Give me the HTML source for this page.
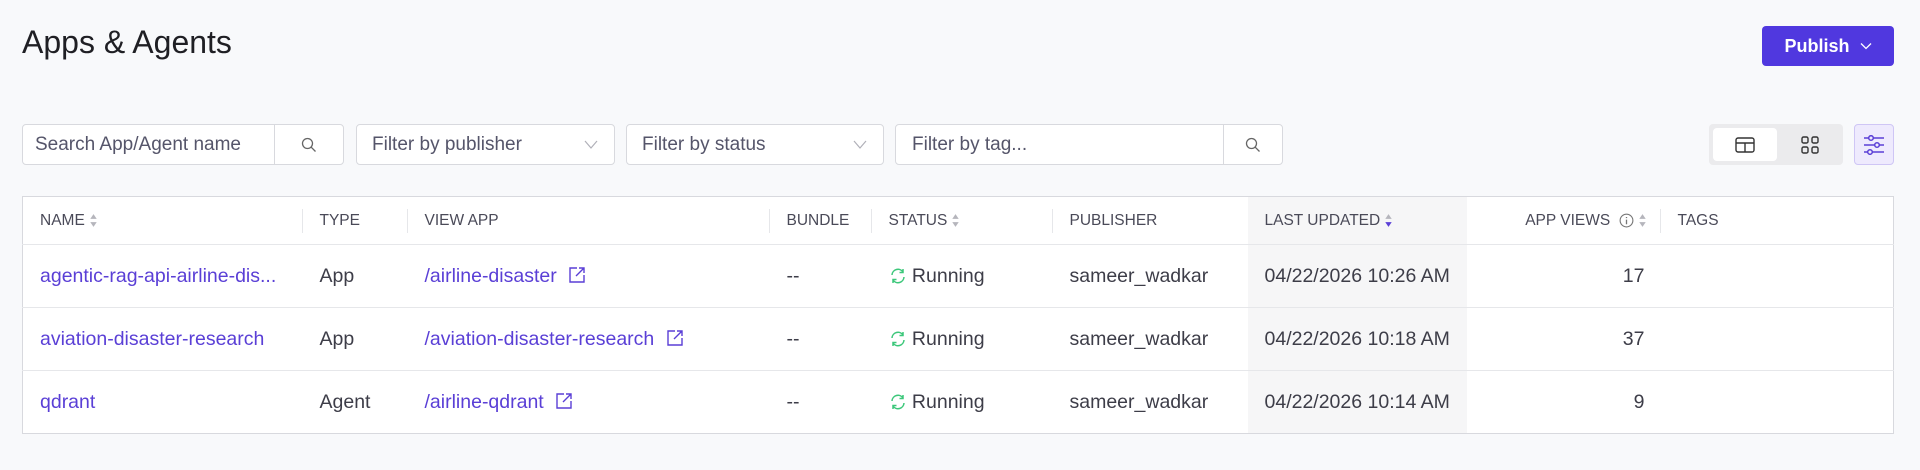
<!DOCTYPE html>
<html><head><meta charset="utf-8"><style>
*{box-sizing:border-box;margin:0;padding:0}
body{width:1920px;height:470px;background:#f8f9fb;font-family:"Liberation Sans",sans-serif;color:#3d3d48;position:relative;overflow:hidden}
.abs{position:absolute}
h1{position:absolute;left:22px;top:24px;font-size:32px;font-weight:400;color:#1f1f24}
.btn{left:1762px;top:26px;width:132px;height:40px;background:#5038df;border-radius:4px;color:#fff;font-size:18px;font-weight:700;display:flex;align-items:center;justify-content:center;gap:10px}
.box{background:#fff;border:1px solid #d8d9de;border-radius:4px;height:41px;top:124px;display:flex;align-items:center;font-size:19px;color:#55556a}
.box span{padding-left:12px;flex:1;white-space:nowrap}
.sep{width:1px;align-self:stretch;background:#d8d9de}
.ico{width:68px;display:flex;justify-content:center}
.dd{padding-right:14px;color:#b0b0b8}
table{position:absolute;left:22px;top:196px;width:1872px;border-collapse:collapse;background:#fff;border:1px solid #d8d9de}
th{height:48px;text-align:left;font-size:15.5px;font-weight:400;color:#4a4a58;padding-left:17px;position:relative;border-bottom:1px solid #e6e7ea;white-space:nowrap}
th.s:after{content:"";position:absolute;right:0;top:12px;height:24px;width:1px;background:#e6e7ea}
td{height:63px;font-size:19.5px;padding-left:17px;border-bottom:1px solid #e6e7ea;white-space:nowrap}
tr:last-child td{border-bottom:none}
.lk{color:#5a3fd6}
.hl{background:#f6f6f7}
.sort{display:inline-block;vertical-align:middle;margin-left:4px;width:9px;height:15px}
</style></head><body>
<h1>Apps &amp; Agents</h1>
<div class="abs btn">Publish <svg width="12" height="8" viewBox="0 0 12 8"><path d="M1 1.5l5 5 5-5" stroke="#fff" stroke-width="1.3" fill="none"/></svg></div>

<div class="abs box" style="left:22px;width:322px"><span>Search App/Agent name</span><div class="sep"></div><div class="ico"><svg width="16" height="16" viewBox="0 0 16 16"><circle cx="6.5" cy="6.5" r="5" stroke="#666" stroke-width="1.3" fill="none"/><path d="M10.2 10.2l4.3 4.3" stroke="#666" stroke-width="1.3"/></svg></div></div>
<div class="abs box" style="left:356px;width:259px"><span style="padding-left:15px">Filter by publisher</span><svg class="dd" width="30" height="10" viewBox="0 0 16 10"><path d="M1 1l6 7 6-7" stroke="#b0b0b8" stroke-width="1.2" fill="none"/></svg></div>
<div class="abs box" style="left:626px;width:258px"><span style="padding-left:15px">Filter by status</span><svg class="dd" width="30" height="10" viewBox="0 0 16 10"><path d="M1 1l6 7 6-7" stroke="#b0b0b8" stroke-width="1.2" fill="none"/></svg></div>
<div class="abs box" style="left:895px;width:388px"><span style="padding-left:16px">Filter by tag...</span><div class="sep"></div><div class="ico" style="width:58px"><svg width="16" height="16" viewBox="0 0 16 16"><circle cx="6.5" cy="6.5" r="5" stroke="#666" stroke-width="1.3" fill="none"/><path d="M10.2 10.2l4.3 4.3" stroke="#666" stroke-width="1.3"/></svg></div></div>

<div class="abs" style="left:1709px;top:124px;width:134px;height:41px;background:#ebebed;border-radius:4px"></div>
<div class="abs" style="left:1713px;top:128px;width:64px;height:33px;background:#fff;border-radius:4px;display:flex;align-items:center;justify-content:center"><svg width="20" height="16" viewBox="0 0 20 16"><rect x="1" y="1" width="18" height="14" rx="2" stroke="#333" stroke-width="1.4" fill="none"/><path d="M1 6h18M10 6v9" stroke="#333" stroke-width="1.4"/></svg></div>
<div class="abs" style="left:1780px;top:128px;width:60px;height:33px;display:flex;align-items:center;justify-content:center"><svg width="18" height="18" viewBox="0 0 18 18"><g stroke="#333" stroke-width="1.4" fill="none"><rect x="1" y="1" width="6" height="6" rx="1.5"/><rect x="11" y="1" width="6" height="6" rx="1.5"/><rect x="1" y="11" width="6" height="6" rx="1.5"/><rect x="11" y="11" width="6" height="6" rx="1.5"/></g></svg></div>
<div class="abs" style="left:1854px;top:124px;width:40px;height:41px;background:#eeeafd;border:1px solid #cfc6f5;border-radius:4px;display:flex;align-items:center;justify-content:center"><svg width="22" height="20" viewBox="0 0 22 20"><g stroke="#5a3fd6" stroke-width="1.5" fill="#eeeafd"><path d="M1 3h20M1 10h20M1 17h20"/><circle cx="8" cy="3" r="2.3"/><circle cx="14" cy="10" r="2.3"/><circle cx="7" cy="17" r="2.3"/></g></svg></div>

<table>
<colgroup><col style="width:280px"><col style="width:105px"><col style="width:362px"><col style="width:102px"><col style="width:181px"><col style="width:195px"><col style="width:219px"><col style="width:194px"><col></colgroup>
<tr>
<th class="s">NAME<svg class="sort" viewBox="0 0 8 14"><path d="M4 1l3 4.5H1zM4 13l3-4.5H1z" fill="#b5b5bc"/></svg></th>
<th class="s">TYPE</th><th class="s">VIEW APP</th><th class="s">BUNDLE</th>
<th class="s">STATUS<svg class="sort" viewBox="0 0 8 14"><path d="M4 1l3 4.5H1zM4 13l3-4.5H1z" fill="#b5b5bc"/></svg></th>
<th>PUBLISHER</th>
<th class="hl">LAST UPDATED<svg class="sort" viewBox="0 0 8 14"><path d="M4 1l3 4.5H1z" fill="#b5b5bc"/><path d="M4 13l3-4.5H1z" fill="#5a3fd6"/></svg></th>
<th class="s" style="text-align:right;padding-right:14px">APP VIEWS <svg width="15" height="15" viewBox="0 0 16 16" style="vertical-align:middle;margin-left:4px"><circle cx="8" cy="8" r="6.8" stroke="#777" stroke-width="1.2" fill="none"/><path d="M8 7v5M8 4.2v1.2" stroke="#777" stroke-width="1.4"/></svg><svg class="sort" viewBox="0 0 8 14"><path d="M4 1l3 4.5H1zM4 13l3-4.5H1z" fill="#b5b5bc"/></svg></th>
<th>TAGS</th>
</tr>
<tr><td class="lk">agentic-rag-api-airline-dis...</td><td>App</td><td class="lk">/airline-disaster <svg width="18" height="18" viewBox="0 0 18 18" style="vertical-align:-2px;margin-left:6px"><path d="M9 2H2v14h14V9M11 2h5v5M16 2L8 10" stroke="#5a3fd6" stroke-width="1.4" fill="none"/></svg></td><td>--</td><td><svg width="18" height="18" viewBox="0 0 18 18" style="vertical-align:-3px"><path d="M3 8a6 6 0 0 1 11-3M14 2v3.5h-3.5M15 10a6 6 0 0 1-11 3M4 16v-3.5h3.5" stroke="#3cc77a" stroke-width="1.5" fill="none"/></svg> Running</td><td>sameer_wadkar</td><td class="hl">04/22/2026 10:26 AM</td><td style="text-align:right;padding-right:16px">17</td><td></td></tr>
<tr><td class="lk">aviation-disaster-research</td><td>App</td><td class="lk">/aviation-disaster-research <svg width="18" height="18" viewBox="0 0 18 18" style="vertical-align:-2px;margin-left:6px"><path d="M9 2H2v14h14V9M11 2h5v5M16 2L8 10" stroke="#5a3fd6" stroke-width="1.4" fill="none"/></svg></td><td>--</td><td><svg width="18" height="18" viewBox="0 0 18 18" style="vertical-align:-3px"><path d="M3 8a6 6 0 0 1 11-3M14 2v3.5h-3.5M15 10a6 6 0 0 1-11 3M4 16v-3.5h3.5" stroke="#3cc77a" stroke-width="1.5" fill="none"/></svg> Running</td><td>sameer_wadkar</td><td class="hl">04/22/2026 10:18 AM</td><td style="text-align:right;padding-right:16px">37</td><td></td></tr>
<tr><td class="lk">qdrant</td><td>Agent</td><td class="lk">/airline-qdrant <svg width="18" height="18" viewBox="0 0 18 18" style="vertical-align:-2px;margin-left:6px"><path d="M9 2H2v14h14V9M11 2h5v5M16 2L8 10" stroke="#5a3fd6" stroke-width="1.4" fill="none"/></svg></td><td>--</td><td><svg width="18" height="18" viewBox="0 0 18 18" style="vertical-align:-3px"><path d="M3 8a6 6 0 0 1 11-3M14 2v3.5h-3.5M15 10a6 6 0 0 1-11 3M4 16v-3.5h3.5" stroke="#3cc77a" stroke-width="1.5" fill="none"/></svg> Running</td><td>sameer_wadkar</td><td class="hl">04/22/2026 10:14 AM</td><td style="text-align:right;padding-right:16px">9</td><td></td></tr>
</table>
</body></html>
